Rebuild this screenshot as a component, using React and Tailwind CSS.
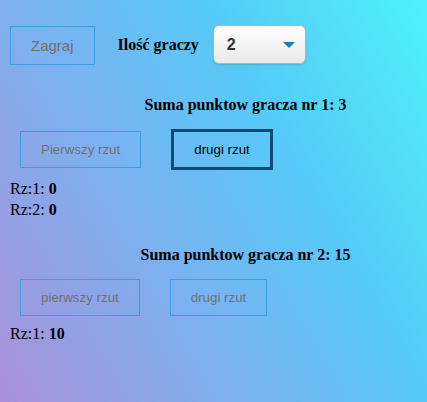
import React from "react";

const serif = "font-['Liberation_Serif','Times_New_Roman',serif]";
const sans = "font-['Liberation_Sans',Arial,sans-serif]";

const DisabledButton = ({ children, className = "" }) => (
  <button
    disabled
    className={`${sans} border border-[#3a9fe0] bg-transparent px-[20px] py-[10px] text-[13.333px] leading-[15px] text-[#707070] ${className}`}
  >
    {children}
  </button>
);

const App = () => {
  return (
    <div
      className={`${serif} min-h-screen bg-[linear-gradient(60deg,#aa90d8_0%,#7db0f0_36%,#55caf8_66%,#4ef2f9_100%)] text-[16px] text-black`}
    >
      {/* Top row */}
      <div className="flex items-start pl-[10px] pt-[25px]">
        <button
          disabled
          className={`${sans} mt-px border border-[#3a9fe0] bg-transparent px-[20px] py-[10px] text-[15px] leading-[17px] text-[#707070]`}
        >
          Zagraj
        </button>
        <span className="ml-[23px] mt-[11px] font-bold leading-[18px]">Ilość graczy</span>
        <div className="ml-[14px] flex h-[39px] w-[93px] items-center justify-between rounded-[6px] border border-[#b5b5b5] bg-[linear-gradient(#ffffff,#e9e9e9)] pl-[13px] pr-[10px] shadow-[0_1px_2px_rgba(0,0,0,0.15)]">
          <span className={`${sans} text-[16px] font-bold text-[#333]`}>2</span>
          <svg width="12" height="6" viewBox="0 0 12 6">
            <path d="M0 0 L12 0 L6 6 Z" fill="#1480bb" />
          </svg>
        </div>
      </div>

      {/* Player 1 */}
      <p className="mt-[31px] pl-[64px] text-center font-bold leading-[18px]">
        Suma punktow gracza nr 1: 3
      </p>
      <div className="mt-[15px] flex items-center gap-[30px] pl-[20px]">
        <DisabledButton>Pierwszy rzut</DisabledButton>
        <button
          className={`${sans} border-[3px] border-[#0e4a78] bg-transparent px-[20px] py-[10px] text-[13.333px] leading-[15px] text-black`}
        >
          drugi rzut
        </button>
      </div>
      <div className="mt-[8px] pl-[10px] leading-[21px]">
        <p>
          Rz:1: <b>0</b>
        </p>
        <p>
          Rz:2: <b>0</b>
        </p>
      </div>

      {/* Player 2 */}
      <p className="mt-[26px] pl-[64px] text-center font-bold leading-[18px]">
        Suma punktow gracza nr 2: 15
      </p>
      <div className="mt-[15px] flex items-center gap-[30px] pl-[20px]">
        <DisabledButton>pierwszy rzut</DisabledButton>
        <DisabledButton>drugi rzut</DisabledButton>
      </div>
      <div className="mt-[7px] pl-[10px] leading-[21px]">
        <p>
          Rz:1: <b>10</b>
        </p>
      </div>
    </div>
  );
};

export default App;
